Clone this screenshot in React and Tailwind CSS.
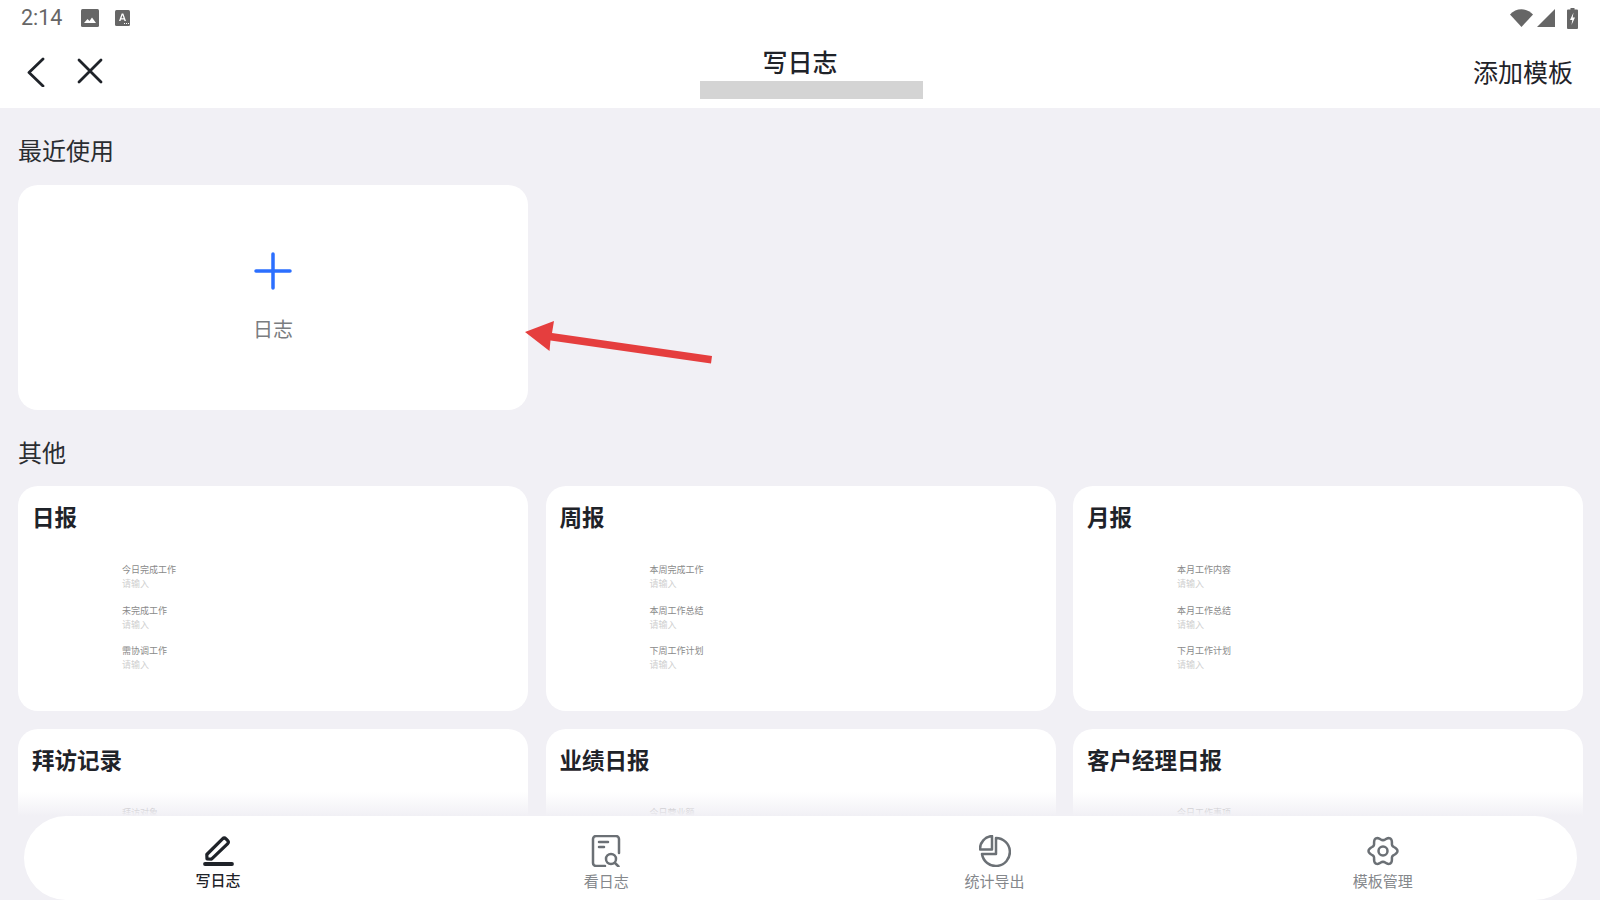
import React from 'react';

const cjk = { fontFamily: '"Noto Sans CJK SC", "Noto Sans", sans-serif' };

const templates = [
  { title: '日报', lines: ['今日完成工作', '未完成工作', '需协调工作'] },
  { title: '周报', lines: ['本周完成工作', '本周工作总结', '下周工作计划'] },
  { title: '月报', lines: ['本月工作内容', '本月工作总结', '下月工作计划'] },
  { title: '拜访记录', lines: ['拜访对象', '拜访内容', '拜访结果'] },
  { title: '业绩日报', lines: ['今日营业额', '今日客户数', '明日计划'] },
  { title: '客户经理日报', lines: ['今日工作事项', '今日客户数', '明日计划'] },
];

// six-lobed outline for the settings icon
const gearPath = () => {
  const pts = [];
  for (let i = 0; i < 72; i++) {
    const a = (i / 72) * Math.PI * 2;
    const r = 12.6 + 1.9 * Math.cos(6 * a + Math.PI);
    pts.push(`${(16 + r * Math.sin(a)).toFixed(2)} ${(16 - r * Math.cos(a)).toFixed(2)}`);
  }
  return `M${pts.join('L')}Z`;
};

const TemplateCard = ({ title, lines }) => (
  <div className="h-[225px] rounded-[20px] bg-white pl-[14px] pt-[14px]">
    <div className="h-[32px] text-[22.5px] leading-[32px] font-bold text-[#1f2329]">{title}</div>
    <div className="ml-[90px] mt-[31px]">
      {lines.map((line) => (
        <div key={line} className="h-[40.5px]">
          <div className="h-[14px] text-[9px] leading-[14px] text-[#8a8a8a]">{line}</div>
          <div className="h-[14px] text-[9px] leading-[14px] text-[#cfcfcf]">请输入</div>
        </div>
      ))}
    </div>
  </div>
);

const NavItem = ({ label, active, children }) => (
  <div className="flex flex-1 flex-col items-center pt-[19px]">
    <div className="h-[32px] w-[32px]">{children}</div>
    <div className={`text-[15px] leading-[22px] ${active ? 'mt-[2px] font-medium text-[#1f2329]' : 'mt-[3px] text-[#85888c]'}`}>
      {label}
    </div>
  </div>
);

export default function App() {
  return (
    <div className="relative flex h-[900px] w-[1600px] flex-col overflow-hidden bg-[#f1f0f5]" style={cjk}>
      <div className="h-[108px] shrink-0 bg-white">
        {/* Status bar */}
        <div className="flex h-[36px] items-center justify-between pl-[21px] pr-[22px]">
          <div className="flex items-center">
            <span className="text-[21.5px] leading-[36px] text-[#666]" style={{ fontFamily: 'Roboto, sans-serif' }}>2:14</span>
            <svg width="18" height="18" viewBox="0 0 18 18" className="ml-[19px]">
              <rect width="18" height="18" rx="1.5" fill="#666" />
              <path d="M3 14l3.5-4 2 2 2.5-3.5 4 5.5z" fill="#fff" />
            </svg>
            <svg width="15" height="16" viewBox="0 0 15 16" className="ml-[16px]">
              <rect width="15" height="16" rx="1.5" fill="#666" />
              <path d="M4 11L6.7 3.5h1.6L11 11H9.5L9 9.4H6L5.5 11zM6.4 8.2h2.2L7.5 5z" fill="#fff" />
              <path d="M9 13.5h1M11 13.5h1M13 13.5h1" stroke="#fff" strokeWidth="1" />
            </svg>
          </div>
          <div className="flex items-center">
            <svg width="23" height="18" viewBox="0 0 23 18">
              <path d="M0 5.5C6-1.5 17-1.5 23 5.5L11.5 18z" fill="#666" />
            </svg>
            <svg width="18" height="18" viewBox="0 0 18 18" className="ml-[4px]">
              <path d="M18 0v18H0z" fill="#666" />
            </svg>
            <svg width="11" height="21" viewBox="0 0 11 21" className="ml-[12px]">
              <path d="M3.5 0h4v1.5H10a1 1 0 0 1 1 1V20a1 1 0 0 1-1 1H1a1 1 0 0 1-1-1V2.500a1 1 0 0 1 1-1h2.500z" fill="#666" />
              <path d="M6.500 4.500L3 12h2.300l-.8 5L8 9.500H5.700z" fill="#fff" />
            </svg>
          </div>
        </div>

        {/* Title bar */}
        <div className="relative flex h-[70px] items-center justify-between pl-[26px] pr-[27px]">
          <div className="flex items-center">
            <svg width="20" height="30" viewBox="0 0 20 30" className="mt-[1px]">
              <path d="M17 2L3 15.500 17 29" fill="none" stroke="#1f2329" strokeWidth="2.800" strokeLinecap="round" strokeLinejoin="round" />
            </svg>
            <svg width="26" height="26" viewBox="0 0 26 26" className="ml-[31px]">
              <path d="M2 2l22 22M24 2L2 24" fill="none" stroke="#1f2329" strokeWidth="2.800" strokeLinecap="round" />
            </svg>
          </div>
          <div className="text-[25px] leading-[36px] text-[#1f2329]">添加模板</div>
          <div className="absolute left-0 right-0 top-[7px] text-center text-[25px] leading-[36px] font-medium text-[#1f2329]">写日志</div>
          {/* redaction bar over the subtitle */}
          <div className="absolute left-[700px] top-[45px] h-[18px] w-[223px] bg-[#d4d4d4]" />
        </div>
      </div>

      <div className="h-[708px] shrink-0 overflow-hidden pl-[18px]">
        <div className="h-[77px] pt-[24px] text-[24px] leading-[36px] text-[#2a2d31]">最近使用</div>
        <div className="grid grid-cols-[repeat(3,510px)] gap-[17px]">
          <div className="flex h-[225px] flex-col items-center rounded-[20px] bg-white pt-[67px]">
            <svg width="38" height="38" viewBox="0 0 38 38">
              <path d="M19 2v34M2 19h34" fill="none" stroke="#2b6fff" strokeWidth="3.500" strokeLinecap="round" />
            </svg>
            <div className="mt-[24px] text-[20px] leading-[30px] text-[#7a7d80]">日志</div>
          </div>
        </div>
        <div className="h-[76px] pt-[24px] text-[24px] leading-[36px] text-[#2a2d31]">其他</div>
        <div className="grid grid-cols-[repeat(3,510px)] gap-x-[17.5px] gap-y-[18px]">
          {templates.map((t) => (
            <TemplateCard key={t.title} title={t.title} lines={t.lines} />
          ))}
        </div>
      </div>

      {/* Annotation arrow */}
      <svg width="1600" height="900" viewBox="0 0 1600 900" className="pointer-events-none absolute left-0 top-0">
        <path d="M525 332L554 321 552 333 712 356 711 363.500 550.500 340.500 549.500 351z" fill="#e53e3e" />
      </svg>

      {/* Fade above the tab bar */}
      <div className="absolute bottom-[84px] left-0 right-0 h-[24px] bg-gradient-to-b from-[#f1f0f5]/0 to-[#f1f0f5]" />

      {/* Tab bar */}
      <div className="ml-[24px] mr-[23px] flex h-[84px] flex-1 rounded-[42px] bg-white">
        <NavItem label="写日志" active>
          <svg width="32" height="32" viewBox="0 0 32 32">
            <path d="M5 24l-.2-4.500L20.500 3.800a2.500 2.500 0 0 1 3.500 0l1.500 1.500a2.500 2.500 0 0 1 0 3.500L9.500 24.200z" fill="none" stroke="#1f2329" strokeWidth="3.200" strokeLinejoin="round" />
            <path d="M3 29h27" fill="none" stroke="#1f2329" strokeWidth="3.800" strokeLinecap="round" />
          </svg>
        </NavItem>
        <NavItem label="看日志">
          <svg width="32" height="32" viewBox="0 0 32 32">
            <path d="M15 31H6a3 3 0 0 1-3-3V4a3 3 0 0 1 3-3h20a3 3 0 0 1 3 3v14" fill="none" stroke="#6b7075" strokeWidth="2.500" strokeLinecap="round" />
            <path d="M9 7h9M9 12h5" fill="none" stroke="#6b7075" strokeWidth="2.500" strokeLinecap="round" />
            <circle cx="21" cy="24" r="5" fill="none" stroke="#6b7075" strokeWidth="2.500" />
            <path d="M25 28l3.500 3.500" fill="none" stroke="#6b7075" strokeWidth="2.500" strokeLinecap="round" />
          </svg>
        </NavItem>
        <NavItem label="统计导出">
          <svg width="32" height="32" viewBox="0 0 32 32">
            <path d="M17 3a14 14 0 1 1-14 16h14z" fill="none" stroke="#6b7075" strokeWidth="2.500" strokeLinejoin="round" />
            <path d="M13 1A13 13 0 0 0 1 14.500h12z" fill="none" stroke="#6b7075" strokeWidth="2.500" strokeLinejoin="round" />
          </svg>
        </NavItem>
        <NavItem label="模板管理">
          <svg width="32" height="32" viewBox="0 0 32 32">
            <path d={gearPath()} fill="none" stroke="#6b7075" strokeWidth="2.500" strokeLinejoin="round" />
            <circle cx="16" cy="16" r="4.500" fill="none" stroke="#6b7075" strokeWidth="2.500" />
          </svg>
        </NavItem>
      </div>
    </div>
  );
}
